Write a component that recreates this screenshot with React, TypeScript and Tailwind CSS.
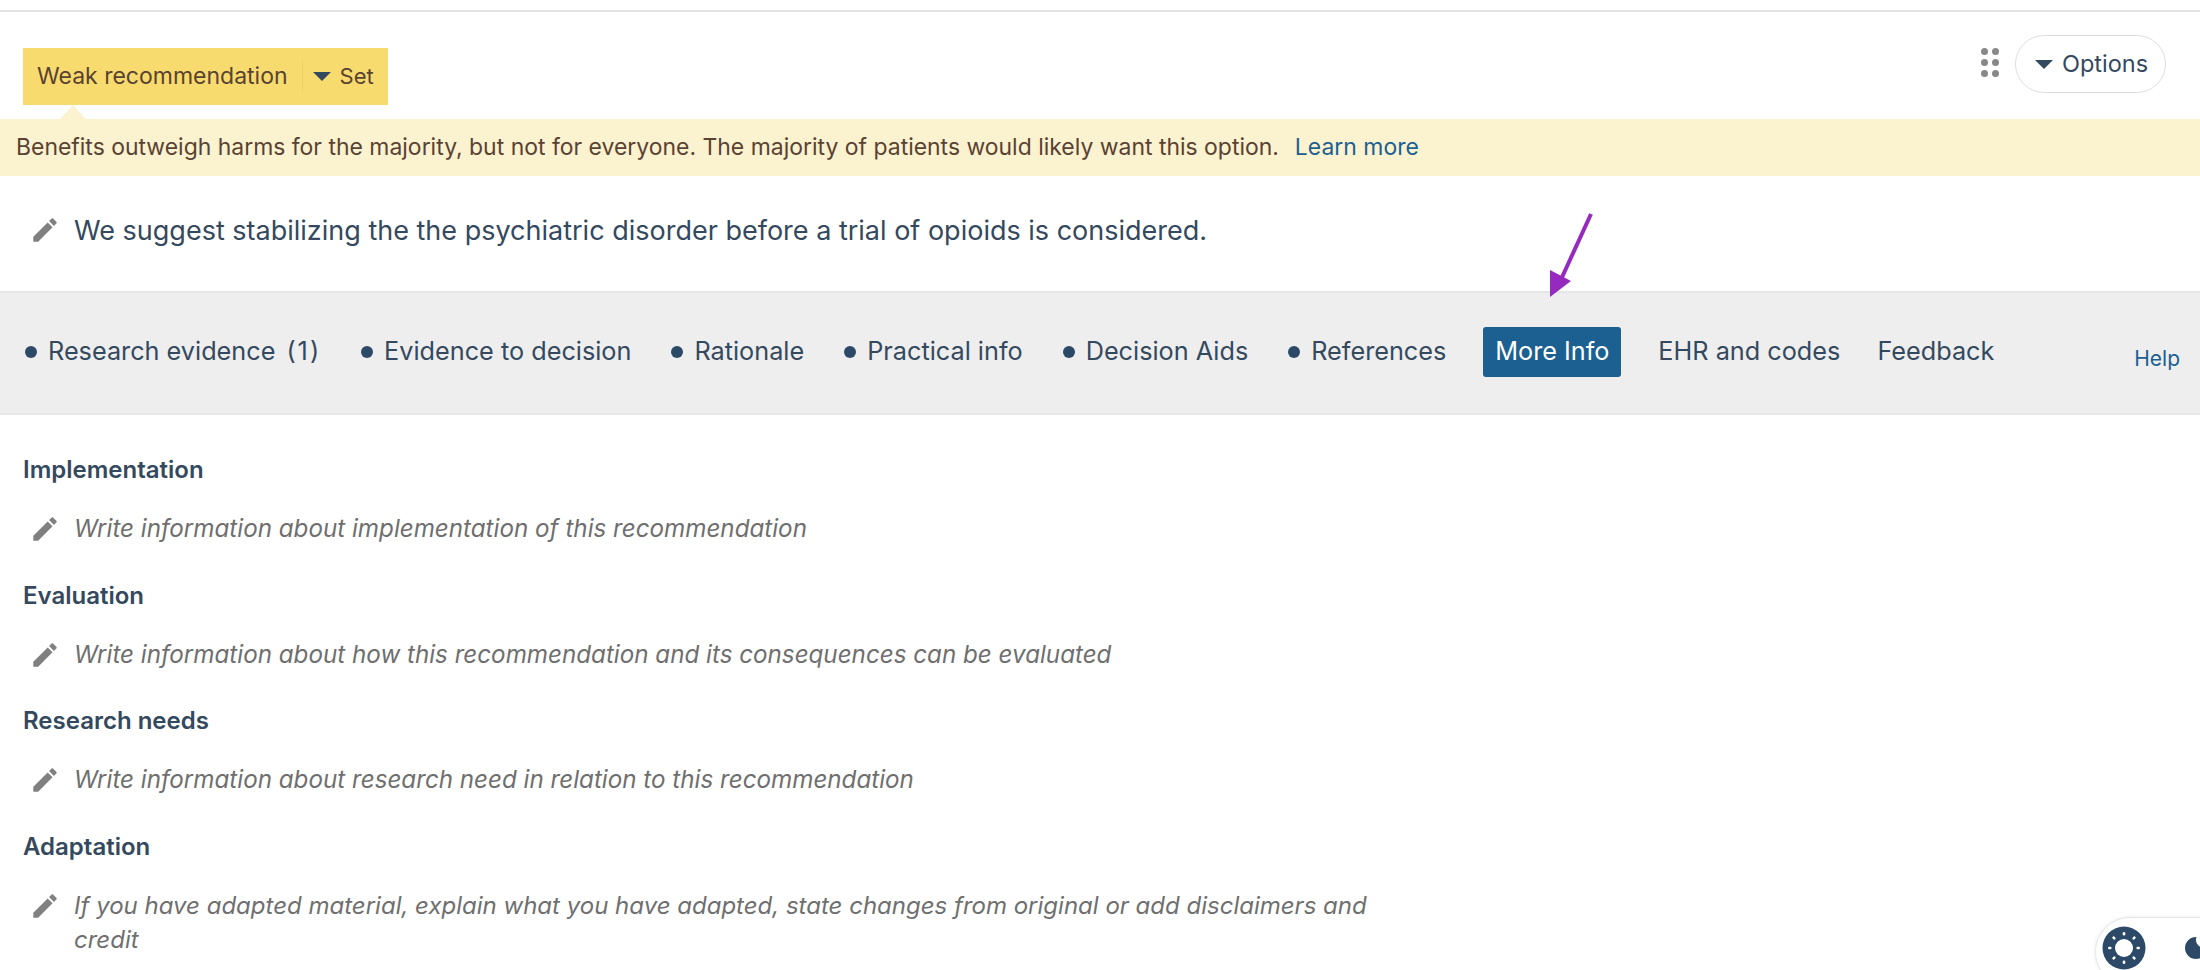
const PENCIL = "M3 17.25V21h3.75L17.81 9.94l-3.75-3.75L3 17.25zM20.71 7.04c.39-.39.39-1.02 0-1.41l-2.34-2.34c-.39-.39-1.02-.39-1.41 0l-1.83 1.83 3.75 3.75 1.83-1.83z";

function Pencil() {
  return (
    <svg viewBox="2 2 20 20" className="w-[26px] h-[26px] shrink-0 fill-[#808080]">
      <path d={PENCIL} />
    </svg>
  );
}

function Caret({ className }: { className: string }) {
  return <span className={"inline-block w-0 h-0 border-x-[9px] border-x-transparent border-t-[9px] " + className} />;
}

function NavItem({ label, dot = true, first = false, count }: { label: string; dot?: boolean; first?: boolean; count?: string }) {
  return (
    <div className={dot && !first ? "ml-[3px] flex items-center gap-[11px]" : "flex items-center gap-[11px]"}>
      {dot && <span className="w-[12px] h-[12px] rounded-full bg-[#2c4a68]" />}
      <span className="whitespace-pre">{label}</span>
      {count && <span className="tracking-[2px]">{count}</span>}
    </div>
  );
}

function Section({ title, text, textClass = "text-[24.2px]" }: { title: string; text: string; textClass?: string }) {
  return (
    <section className="pt-[13px] pb-[18.5px]">
      <h3 className="pl-[23px] text-[24px] leading-[36px] font-semibold text-[#34495e]">{title}</h3>
      <div className="mt-[24px] flex items-start pl-[32px] gap-[16px]">
        <div className="pt-[4px]"><Pencil /></div>
        <p className={"w-[1320px] leading-[34px] italic text-[#6f6f6f] " + textClass}>{text}</p>
      </div>
    </section>
  );
}

export default function App() {
  return (
    <div className="relative h-[970px] w-[2200px] overflow-hidden bg-white font-['Inter',sans-serif] text-[#34495e]">
      <div className="h-[12px] border-b-2 border-[#e4e4e4]" />
      <header className="h-[107px] flex justify-between pl-[23px] pr-[34px]">
        <div className="relative mt-[36px] h-[57px] w-[365px] bg-[#f8db6e] flex items-center pb-[1px] pl-[14px] text-[#5a4232]">
          <span className="text-[23px]">Weak recommendation</span>
          <span className="ml-[14px] mr-[10px] h-[34px] w-px bg-[#efd264]" />
          <Caret className="border-t-[#34495e]" />
          <span className="ml-[9px] text-[22px] text-[#5a4232]">Set</span>
          <span className="absolute left-[37px] top-[57px] w-0 h-0 border-x-[13px] border-x-transparent border-b-[14px] border-b-[#fbf2d0]" />
        </div>
        <div className="mt-[23px] flex items-start gap-[16px]">
          <div className="mt-[13px] grid grid-cols-2 gap-x-[4px] gap-y-[4px]">
            {[0, 1, 2, 3, 4, 5].map((i) => (
              <span key={i} className="w-[7px] h-[7px] rounded-full bg-[#888888]" />
            ))}
          </div>
          <button className="h-[58px] w-[151px] rounded-full border border-[#dedede] flex items-center justify-center gap-[9px] pl-[2px] text-[23.5px] text-[#34495e]">
            <Caret className="border-t-[#34495e]" />
            Options
          </button>
        </div>
      </header>
      <div className="h-[57px] bg-[#fbf2d0] flex items-center pl-[16px] text-[22.95px] text-[#5a4232]">
        <span>Benefits outweigh harms for the majority, but not for everyone. The majority of patients would likely want this option.</span>
        <span className="ml-[16px] text-[#1c6091]">Learn more</span>
      </div>
      <div className="h-[115px] flex items-center pl-[32px] gap-[16px] pb-[4px]">
        <div className="mb-[3px]"><Pencil /></div>
        <p className="text-[27px]">We suggest stabilizing the the psychiatric disorder before a trial of opioids is considered.</p>
      </div>
      <nav className="relative h-[124px] bg-[#eeeeee] border-y-2 border-[#e6e6e6] flex items-center pl-[25px] pb-[3px] text-[25.25px] text-[#34495e]">
        <div className="flex items-center gap-[37px]">
          <NavItem label="Research evidence" count="(1)" first />
          <NavItem label="Evidence to decision" />
          <NavItem label="Rationale" />
          <NavItem label="Practical info" />
          <NavItem label="Decision Aids" />
          <NavItem label="References" />
          <span className="h-[50px] w-[138px] rounded-[3px] bg-[#1c6091] text-white flex items-center justify-center">More Info</span>
          <NavItem label="EHR and codes" dot={false} />
          <NavItem label="Feedback" dot={false} />
        </div>
        <a className="absolute right-[20px] top-[50px] text-[21px] text-[#1c6091]">Help</a>
      </nav>
      <main className="pt-[24px]">
        <Section title="Implementation" text="Write information about implementation of this recommendation" />
        <Section title="Evaluation" text="Write information about how this recommendation and its consequences can be evaluated" />
        <Section title="Research needs" text="Write information about research need in relation to this recommendation" />
        <Section title="Adaptation" textClass="text-[24px]" text="If you have adapted material, explain what you have adapted, state changes from original or add disclaimers and credit" />
      </main>
      <svg className="absolute left-[1540px] top-[205px] w-[60px] h-[100px]" viewBox="1540 205 60 100">
        <path d="M1591 214 L1558 286" stroke="#962abf" strokeWidth="4" fill="none" />
        <path d="M1550 297 L1550 270 L1571 281 Z" fill="#962abf" />
      </svg>
      <div className="absolute left-[2095px] top-[917px] w-[140px] h-[70px] rounded-l-[35px] bg-white border border-[#e6e6e6] shadow-[0_0_4px_rgba(0,0,0,0.08)]">
        <svg className="absolute left-[6px] top-[8px] w-[44px] h-[44px]" viewBox="0 0 44 44">
          <circle cx="22" cy="22" r="21.5" fill="#2c4a68" />
          <circle cx="22" cy="22" r="9" fill="#fff" />
          {[0, 45, 90, 135, 180, 225, 270, 315].map((a) => (
            <rect key={a} x="20.7" y="6" width="2.6" height="3.6" rx="1.3" fill="#fff" transform={`rotate(${a} 22 22)`} />
          ))}
        </svg>
        <svg className="absolute left-[88px] top-[18px] w-[24px] h-[24px]" viewBox="0 0 24 24">
          <path d="M12 1a11 11 0 1 0 11 11c0-.5 0-1-.1-1.5A7.5 7.5 0 0 1 12.5 1.1C12.3 1 12.2 1 12 1z" fill="#2c4a68" />
        </svg>
      </div>
    </div>
  );
}
